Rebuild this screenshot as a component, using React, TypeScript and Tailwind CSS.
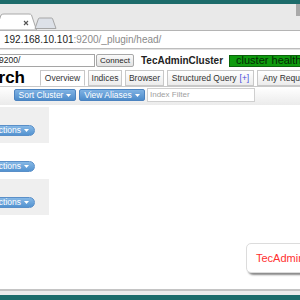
import React from "react";

const Caret = () => (
  <svg width="5" height="3" viewBox="0 0 5 3" className="ml-[3px] shrink-0">
    <polygon points="0,0 5,0 2.5,3" fill="#ffffff" />
  </svg>
);

const BlueBtn = ({ label, w, round }: { label: string; w: number; round?: boolean }) => (
  <div
    className={`flex h-[12px] items-center justify-center whitespace-nowrap border border-[#4b83c0] bg-gradient-to-b from-[#7fb2e3] to-[#4d8ccb] px-[4px] text-[8.5px] leading-none text-white ${
      round ? "rounded-full" : "rounded-[2px]"
    }`}
    style={{ width: w }}
  >
    {label}
    <Caret />
  </div>
);

const Tab = ({ label, w, active, plus }: { label: string; w: number; active?: boolean; plus?: boolean }) => (
  <div
    className={`flex h-[16px] shrink-0 items-center justify-center whitespace-nowrap border border-[#c8c8c8] text-[8.5px] leading-none text-[#333] ${
      active ? "border-b-white bg-white" : "bg-gradient-to-b from-white to-[#ececec]"
    }`}
    style={{ width: w }}
  >
    {label}
    {plus && <span className="ml-[3px] text-[#4a4ae0]">[+]</span>}
  </div>
);

const ActionsRow = ({ gray }: { gray?: boolean }) => (
  <div className="flex h-[36px] items-end pb-[7px]">
    <div className={`flex h-[36px] w-[49px] items-end pb-[7px] -mb-[7px] ${gray ? "bg-[#efefef]" : ""}`}>
      <div className="flex w-[35px] justify-end overflow-hidden">
        <div className="flex h-[11px] shrink-0 items-center whitespace-nowrap rounded-full border border-[#5a8fc8] bg-gradient-to-b from-[#86b8e6] to-[#5393d0] pl-[6px] pr-[5px] text-[8.5px] leading-none text-white">
          Actions
          <Caret />
        </div>
      </div>
    </div>
  </div>
);

export default function App() {
  return (
    <div
      className="relative flex h-[300px] w-[300px] flex-col overflow-hidden bg-white"
      style={{ fontFamily: '"Liberation Sans", Arial, sans-serif' }}
    >
      {/* window top */}
      <div className="h-[4px] shrink-0 bg-[#1d6c6b]" />
      {/* tab strip */}
      <div className="relative h-[26px] shrink-0 bg-[#e9e9e9]">
        <svg width="300" height="26" viewBox="0 0 300 26" className="absolute left-0 top-0">
          <path d="M -4 26 L 1 11 Q 2 10 4 10 L 29 10 Q 31 10 31.5 11 L 36.5 26 Z" fill="#ffffff" stroke="#a9a9a9" strokeWidth="1" />
          <path d="M 35 24.5 L 38.5 14.5 Q 39 14 40 14 L 51 14 Q 52 14 52.5 14.5 L 56 24.5 Z" fill="#dde1e8" stroke="#a6a6a6" strokeWidth="1" />
          <path d="M 24 17 L 28 21 M 28 17 L 24 21" stroke="#555" strokeWidth="1.1" />
        </svg>
        <div className="absolute right-0 top-0 h-[12px] w-[4px] bg-[#a9a9a9]" />
      </div>
      {/* address bar */}
      <div className="flex h-[18px] shrink-0 items-center border-t border-[#b4b4b4] bg-white pl-[4px] text-[10px] leading-none">
        <span className="text-[#222]">192.168.10.101</span>
        <span className="text-[#8a8a8a]">:9200/_plugin/head/</span>
      </div>
      <div className="h-[1px] shrink-0 bg-[#bdbdbd]" />
      <div className="h-[1px] shrink-0 bg-[#e2e2e2]" />

      {/* page */}
      <div className="flex min-h-0 flex-1 flex-col">
        {/* connect row */}
        <div className="mt-[4px] flex h-[13px] items-center">
          <div className="flex h-[13px] w-[95px] shrink-0 items-center border border-l-0 border-[#a5a5a5] text-[8.5px] leading-none text-[#222]">
            <span className="-ml-[1px]">9200/</span>
          </div>
          <div className="ml-[1px] flex h-[13px] w-[38px] shrink-0 items-center justify-center rounded-[2px] border border-[#a8a8a8] bg-gradient-to-b from-[#fafafa] to-[#e2e2e2] text-[8px] leading-none text-[#222]">
            Connect
          </div>
          <div className="ml-[7px] shrink-0 whitespace-nowrap text-[10px] font-bold leading-none text-[#222]">
            TecAdminCluster
          </div>
          <div className="ml-[6px] flex h-[12px] shrink-0 items-center whitespace-nowrap border border-[#0a640a] bg-[#0e9b0e] pl-[6px] text-[11px] leading-none text-[#062906]">
            cluster health: green (2 of 2)
          </div>
        </div>

        {/* heading + tabs */}
        <div className="flex h-[19px] items-end">
          <div className="flex w-[25px] shrink-0 justify-end self-center overflow-hidden pt-[2px]">
            <span className="whitespace-nowrap text-[17px] font-bold leading-none text-black">elasticsearch</span>
          </div>
          <div className="ml-[15px] flex gap-[3px]">
            <Tab label="Overview" w={45} active />
            <Tab label="Indices" w={34} />
            <Tab label="Browser" w={39} />
            <Tab label="Structured Query" w={87} plus />
            <Tab label="Any Request" w={60} />
          </div>
        </div>

        {/* toolbar */}
        <div className="flex h-[19px] items-start border-t border-[#c8c8c8] bg-gradient-to-b from-white to-[#ebebeb] pt-[1px]">
          <div className="ml-[14px] flex items-center gap-[3px]">
            <BlueBtn label="Sort Cluster" w={62} />
            <BlueBtn label="View Aliases" w={66} />
            <div className="ml-[-1px] flex h-[14px] w-[108px] items-center border border-[#cfcfcf] bg-white pl-[2px] text-[8px] leading-none text-[#a0a0a0]">
              Index Filter
            </div>
          </div>
        </div>

        {/* node rows */}
        <div className="mt-[2px] flex flex-col">
          <ActionsRow gray />
          <ActionsRow />
          <ActionsRow gray />
        </div>
      </div>

      {/* bottom window edge */}
      <div className="h-[2px] shrink-0 bg-[#c4c4c4]" />
      <div className="h-[4px] shrink-0 bg-[#ececec]" />
      <div className="h-[5px] shrink-0 bg-[#1d6c6b]" />

      {/* toast */}
      <div className="absolute left-[246px] top-[243px] flex h-[30px] w-[70px] items-center rounded-[5px] border border-[#dcdcdc] bg-white pl-[9px] text-[11px] leading-none text-[#ff3030] shadow-[2px_2px_2px_#8a8a8a]">
        TecAdminCluster
      </div>
    </div>
  );
}
